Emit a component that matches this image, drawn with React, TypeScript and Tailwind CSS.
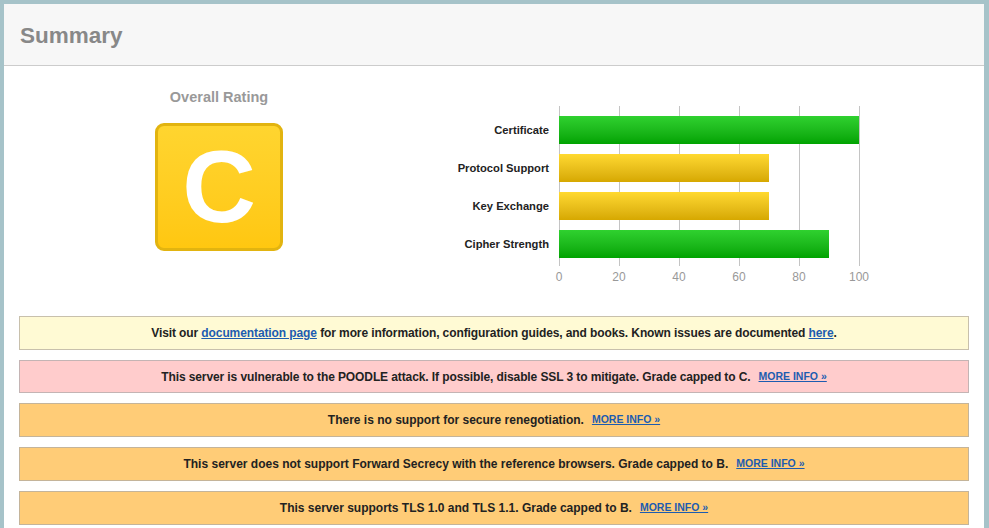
const bars = [
  { label: "Certificate", value: 100, color: "green" },
  { label: "Protocol Support", value: 70, color: "yellow" },
  { label: "Key Exchange", value: 70, color: "yellow" },
  { label: "Cipher Strength", value: 90, color: "green" },
];

const ticks = [0, 20, 40, 60, 80, 100];

const MoreInfo = () => (
  <a href="#" className="ml-[8px] text-[10.5px] font-bold text-[#1d5cb0] underline">
    MORE INFO »
  </a>
);

const App = () => {
  return (
    <div
      className="w-[989px] h-[528px] overflow-hidden bg-[#a6c3c9] pl-[4px] pt-[4px] pr-[5px]"
      style={{ fontFamily: '"Liberation Sans", Arial, sans-serif' }}
    >
      <div className="bg-white h-full">
        <div className="h-[62px] bg-[#f7f7f7] border-b border-[#cccccc] pl-[16px] pt-[19px]">
          <h1 className="text-[22.5px] leading-[26px] font-bold text-[#888888]">Summary</h1>
        </div>

        <div className="flex h-[250px]">
          <div className="w-[430px] flex flex-col items-center pt-[23px]">
            <div className="text-[14.5px] leading-[16px] font-bold text-[#999999]">Overall Rating</div>
            <div className="mt-[18px] w-[128px] h-[128px] rounded-[9px] border-[3px] border-[#e2b410] bg-gradient-to-b from-[#ffd52f] to-[#ffc710] flex items-center justify-center">
              <span className="text-[102px] leading-none font-bold text-white">C</span>
            </div>
          </div>

          <div className="pt-[40px]">
            <div className="flex">
              <div className="w-[115px] pt-[10px] flex flex-col gap-[10px]">
                {bars.map((b) => (
                  <div
                    key={b.label}
                    className="h-[28px] flex items-center justify-end text-[11.2px] font-bold text-[#222222]"
                  >
                    {b.label}
                  </div>
                ))}
              </div>
              <div className="ml-[10px] relative w-[300px] h-[160px]">
                {ticks.map((t) => (
                  <div
                    key={t}
                    className="absolute top-0 bottom-0 w-px bg-[#c4c4c4]"
                    style={{ left: `${t * 3}px` }}
                  />
                ))}
                <div className="relative pt-[10px] flex flex-col gap-[10px]">
                  {bars.map((b) => (
                    <div
                      key={b.label}
                      className={
                        b.color === "green"
                          ? "h-[28px] bg-gradient-to-b from-[#2fd12f] to-[#00a300]"
                          : "h-[28px] bg-gradient-to-b from-[#ffd92f] to-[#d6a800]"
                      }
                      style={{ width: `${b.value * 3}px` }}
                    />
                  ))}
                </div>
              </div>
            </div>
            <div className="ml-[125px] relative h-[20px] w-[300px]">
              {ticks.map((t) => (
                <span
                  key={t}
                  className="absolute top-[4px] -translate-x-1/2 text-[12px] leading-[14px] text-[#999999]"
                  style={{ left: `${t * 3}px` }}
                >
                  {t}
                </span>
              ))}
            </div>
          </div>
        </div>

        <div className="px-[15px] flex flex-col gap-[10px] text-[12px] font-bold text-[#222222]">
          <div className="h-[34px] border border-[#c8c0ac] bg-[#fffad4] flex items-center justify-center">
            <span className="tracking-[-0.1px]">
              Visit our{" "}
              <a href="#" className="text-[#1d5cb0] underline">
                documentation page
              </a>{" "}
              for more information, configuration guides, and books. Known issues are documented{" "}
              <a href="#" className="text-[#1d5cb0] underline">
                here
              </a>
              .
            </span>
          </div>
          <div className="h-[33px] border border-[#c4b4b4] bg-[#ffcccc] flex items-center justify-center">
            <span className="tracking-[-0.1px]">This server is vulnerable to the POODLE attack. If possible, disable SSL 3 to mitigate. Grade capped to C.</span>
            <MoreInfo />
          </div>
          <div className="h-[34px] border border-[#c4b49a] bg-[#ffcc77] flex items-center justify-center">
            <span>There is no support for secure renegotiation.</span>
            <MoreInfo />
          </div>
          <div className="h-[34px] border border-[#c4b49a] bg-[#ffcc77] flex items-center justify-center">
            <span>This server does not support Forward Secrecy with the reference browsers. Grade capped to B.</span>
            <MoreInfo />
          </div>
          <div className="h-[34px] border border-[#c4b49a] bg-[#ffcc77] flex items-center justify-center">
            <span>This server supports TLS 1.0 and TLS 1.1. Grade capped to B.</span>
            <MoreInfo />
          </div>
        </div>
      </div>
    </div>
  );
};

export default App;
